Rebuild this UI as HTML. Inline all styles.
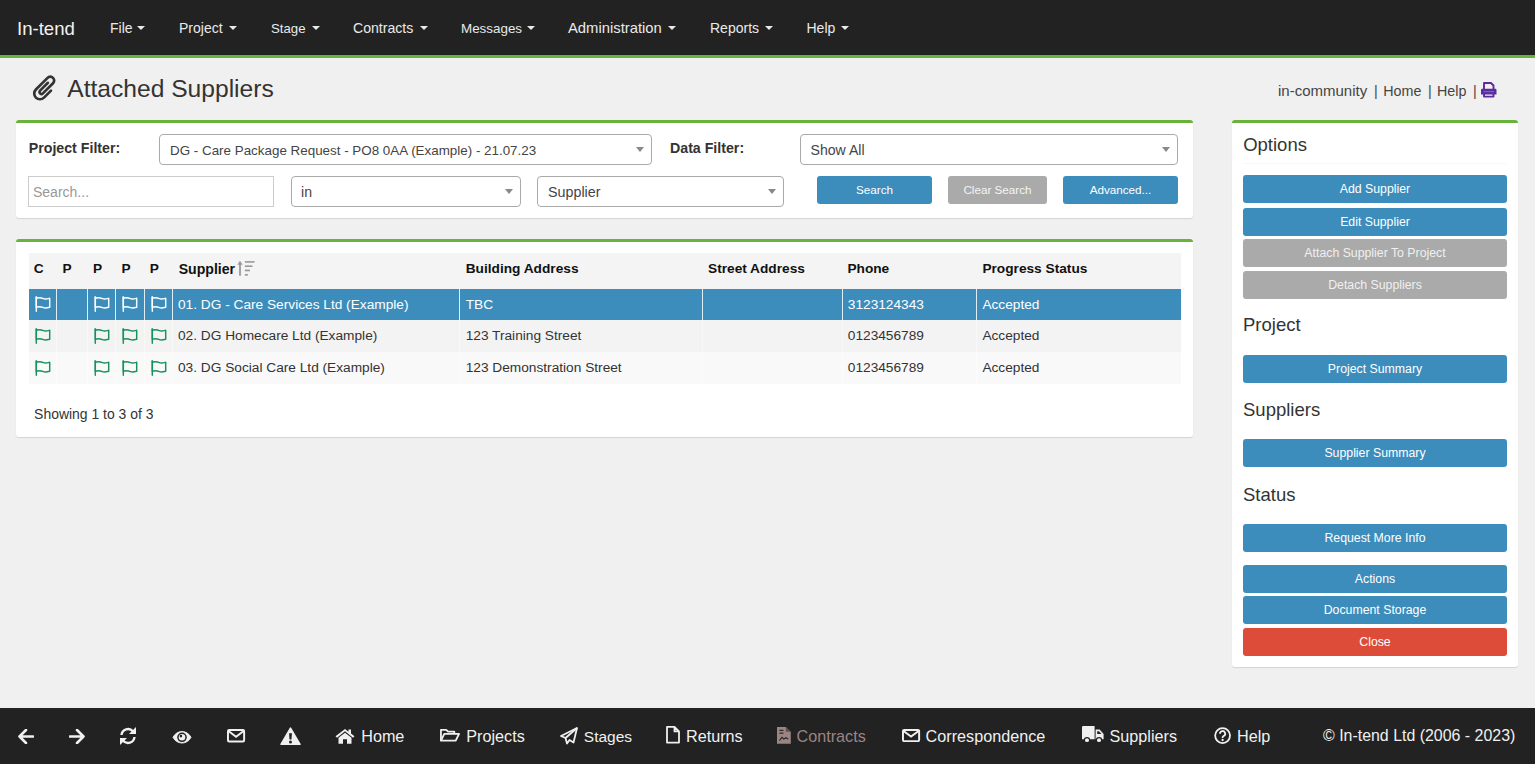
<!DOCTYPE html>
<html><head><meta charset="utf-8"><title>Attached Suppliers</title>
<style>
html,body{margin:0;padding:0;}
body{width:1535px;height:764px;overflow:hidden;position:relative;background:#f0f0f0;font-family:"Liberation Sans", sans-serif;}
.t{position:absolute;white-space:nowrap;}
.r{position:absolute;}
</style></head><body>
<div class="r" style="left:0px;top:0px;width:1535px;height:55px;background:#222;"></div>
<div class="r" style="left:0px;top:55px;width:1535px;height:3px;background:#69b33d;"></div>
<div class="t" style="left:17.00px;top:19.86px;font-size:18.6px;line-height:18.6px;font-weight:normal;color:#f2f2f2;">In-tend</div>
<div class="t" style="left:110.00px;top:21.25px;font-size:14.0px;line-height:14.0px;font-weight:normal;color:#eaeaea;">File</div>
<div class="t" style="left:179.00px;top:21.25px;font-size:14.0px;line-height:14.0px;font-weight:normal;color:#eaeaea;">Project</div>
<div class="t" style="left:271.00px;top:21.93px;font-size:13.2px;line-height:13.2px;font-weight:normal;color:#eaeaea;">Stage</div>
<div class="t" style="left:353.00px;top:21.16px;font-size:14.1px;line-height:14.1px;font-weight:normal;color:#eaeaea;">Contracts</div>
<div class="t" style="left:461.00px;top:21.76px;font-size:13.4px;line-height:13.4px;font-weight:normal;color:#eaeaea;">Messages</div>
<div class="t" style="left:568.00px;top:20.57px;font-size:14.8px;line-height:14.8px;font-weight:normal;color:#eaeaea;">Administration</div>
<div class="t" style="left:710.00px;top:21.25px;font-size:14.0px;line-height:14.0px;font-weight:normal;color:#eaeaea;">Reports</div>
<div class="t" style="left:806.50px;top:21.25px;font-size:14.0px;line-height:14.0px;font-weight:normal;color:#eaeaea;">Help</div>
<svg class="r" style="left:137.4px;top:26.4px;" width="8" height="4" viewBox="0 0 8 4" preserveAspectRatio="none"><path d="M0 0H8L4 4Z" fill="#eaeaea"/></svg>
<svg class="r" style="left:228.8px;top:26.4px;" width="8" height="4" viewBox="0 0 8 4" preserveAspectRatio="none"><path d="M0 0H8L4 4Z" fill="#eaeaea"/></svg>
<svg class="r" style="left:311.6px;top:26.4px;" width="8" height="4" viewBox="0 0 8 4" preserveAspectRatio="none"><path d="M0 0H8L4 4Z" fill="#eaeaea"/></svg>
<svg class="r" style="left:419.6px;top:26.4px;" width="8" height="4" viewBox="0 0 8 4" preserveAspectRatio="none"><path d="M0 0H8L4 4Z" fill="#eaeaea"/></svg>
<svg class="r" style="left:526.6px;top:26.4px;" width="8" height="4" viewBox="0 0 8 4" preserveAspectRatio="none"><path d="M0 0H8L4 4Z" fill="#eaeaea"/></svg>
<svg class="r" style="left:668px;top:26.4px;" width="8" height="4" viewBox="0 0 8 4" preserveAspectRatio="none"><path d="M0 0H8L4 4Z" fill="#eaeaea"/></svg>
<svg class="r" style="left:765px;top:26.4px;" width="8" height="4" viewBox="0 0 8 4" preserveAspectRatio="none"><path d="M0 0H8L4 4Z" fill="#eaeaea"/></svg>
<svg class="r" style="left:840.8px;top:26.4px;" width="8" height="4" viewBox="0 0 8 4" preserveAspectRatio="none"><path d="M0 0H8L4 4Z" fill="#eaeaea"/></svg>
<svg class="r" style="left:29.5px;top:73px;" width="30" height="30" viewBox="0 0 30 30" preserveAspectRatio="none"><g transform="translate(15 15.5) rotate(45) scale(1.1)" fill="none" stroke="#333" stroke-width="2.45" stroke-linecap="round"><path d="M5.2 -2.5 V6.5 A5.2 5.2 0 0 1 -5.2 6.5 V-8.5 A3.5 3.5 0 0 1 1.8 -8.5 V4.5 A1.8 1.8 0 0 1 -1.8 4.5 V-5.5"/></g></svg>
<div class="t" style="left:67.30px;top:77.48px;font-size:24.6px;line-height:24.6px;font-weight:normal;color:#333;">Attached Suppliers</div>
<div class="t" style="left:1278.00px;top:83.00px;font-size:15.0px;line-height:15.0px;font-weight:normal;color:#444;">in-community</div>
<div class="t" style="left:1374.00px;top:83.60px;font-size:14.3px;line-height:14.3px;font-weight:normal;color:#444;">|</div>
<div class="t" style="left:1383.30px;top:83.60px;font-size:14.3px;line-height:14.3px;font-weight:normal;color:#444;">Home</div>
<div class="t" style="left:1428.00px;top:83.60px;font-size:14.3px;line-height:14.3px;font-weight:normal;color:#444;">|</div>
<div class="t" style="left:1437.00px;top:83.60px;font-size:14.3px;line-height:14.3px;font-weight:normal;color:#444;">Help</div>
<div class="t" style="left:1473.00px;top:83.60px;font-size:14.3px;line-height:14.3px;font-weight:normal;color:#444;">|</div>
<svg class="r" style="left:1481px;top:82.3px;" width="16" height="16" viewBox="0 0 16 16" preserveAspectRatio="none"><g fill="none" stroke="#5b2a9e" stroke-width="1.9" stroke-linejoin="round"><path d="M3 7.5V1H10L12.5 3.5V7.5"/><path d="M3 11.5V14.6H12.5V11.5"/></g><path d="M1.2 6.8H14.3A1.2 1.2 0 0 1 15.5 8V12.5H0V8A1.2 1.2 0 0 1 1.2 6.8Z" fill="#5b2a9e"/><rect x="2.5" y="9.2" width="10.5" height="0.9" fill="#8a6bc0"/></svg>
<div class="r" style="left:16px;top:120px;width:1177px;height:98px;background:#fff;border-top:3px solid #69b33d;border-radius:3px;box-shadow:0 1px 1px rgba(0,0,0,0.12);box-sizing:border-box;"></div>
<div class="t" style="left:28.75px;top:140.98px;font-size:14.2px;line-height:14.2px;font-weight:bold;color:#333;">Project Filter:</div>
<div class="t" style="left:670.00px;top:140.98px;font-size:14.2px;line-height:14.2px;font-weight:bold;color:#333;">Data Filter:</div>
<div class="r" style="left:159px;top:134px;width:493px;height:31px;background:#fff;border:1px solid #aaa;border-radius:4px;box-sizing:border-box;"></div>
<div class="t" style="left:170.00px;top:143.66px;font-size:13.4px;line-height:13.4px;font-weight:normal;color:#444;">DG - Care Package Request - PO8 0AA (Example) - 21.07.23</div>
<svg class="r" style="left:636px;top:147px;" width="8" height="5" viewBox="0 0 8 5" preserveAspectRatio="none"><path d="M0 0H8L4 5Z" fill="#888"/></svg>
<div class="r" style="left:800px;top:134px;width:378px;height:31px;background:#fff;border:1px solid #aaa;border-radius:4px;box-sizing:border-box;"></div>
<div class="t" style="left:810.50px;top:143.06px;font-size:14.1px;line-height:14.1px;font-weight:normal;color:#444;">Show All</div>
<svg class="r" style="left:1162px;top:147px;" width="8" height="5" viewBox="0 0 8 5" preserveAspectRatio="none"><path d="M0 0H8L4 5Z" fill="#888"/></svg>
<div class="r" style="left:28px;top:176px;width:246px;height:31px;background:#fff;border:1px solid #ccc;box-sizing:border-box;"></div>
<div class="t" style="left:33.00px;top:184.95px;font-size:14.0px;line-height:14.0px;font-weight:normal;color:#999;">Search...</div>
<div class="r" style="left:291px;top:176px;width:230px;height:31px;background:#fff;border:1px solid #aaa;border-radius:4px;box-sizing:border-box;"></div>
<div class="t" style="left:301.00px;top:185.06px;font-size:14.1px;line-height:14.1px;font-weight:normal;color:#444;">in</div>
<svg class="r" style="left:505px;top:189px;" width="8" height="5" viewBox="0 0 8 5" preserveAspectRatio="none"><path d="M0 0H8L4 5Z" fill="#888"/></svg>
<div class="r" style="left:537px;top:176px;width:247px;height:31px;background:#fff;border:1px solid #aaa;border-radius:4px;box-sizing:border-box;"></div>
<div class="t" style="left:548.00px;top:184.90px;font-size:14.3px;line-height:14.3px;font-weight:normal;color:#444;">Supplier</div>
<svg class="r" style="left:768px;top:189px;" width="8" height="5" viewBox="0 0 8 5" preserveAspectRatio="none"><path d="M0 0H8L4 5Z" fill="#888"/></svg>
<div class="r" style="left:817px;top:176px;width:115px;height:28px;background:#3c8dbc;border-radius:3px;"></div>
<div class="t" style="left:574.50px;width:600px;text-align:center;top:184.40px;font-size:11.7px;line-height:11.7px;font-weight:normal;color:#fff;">Search</div>
<div class="r" style="left:948px;top:176px;width:99px;height:28px;background:#aaaaaa;border-radius:3px;"></div>
<div class="t" style="left:697.50px;width:600px;text-align:center;top:184.40px;font-size:11.7px;line-height:11.7px;font-weight:normal;color:#f4f4f4;">Clear Search</div>
<div class="r" style="left:1063px;top:176px;width:115px;height:28px;background:#3c8dbc;border-radius:3px;"></div>
<div class="t" style="left:820.50px;width:600px;text-align:center;top:184.40px;font-size:11.7px;line-height:11.7px;font-weight:normal;color:#fff;">Advanced...</div>
<div class="r" style="left:16px;top:239px;width:1177px;height:198px;background:#fff;border-top:3px solid #69b33d;border-radius:3px;box-shadow:0 1px 1px rgba(0,0,0,0.12);box-sizing:border-box;"></div>
<div class="r" style="left:29px;top:253px;width:1152px;height:36px;background:#f4f4f4;"></div>
<div class="r" style="left:29px;top:289px;width:1152px;height:31px;background:#3c8dbc;"></div>
<div class="r" style="left:29px;top:320px;width:1152px;height:32px;background:#f3f3f3;"></div>
<div class="r" style="left:29px;top:352px;width:1152px;height:32px;background:#f9f9f9;"></div>
<div class="r" style="left:56px;top:289px;width:1px;height:31px;background:#fff;opacity:0.85;"></div>
<div class="r" style="left:56px;top:320px;width:1px;height:64px;background:#fff;opacity:0.45;"></div>
<div class="r" style="left:87px;top:289px;width:1px;height:31px;background:#fff;opacity:0.85;"></div>
<div class="r" style="left:87px;top:320px;width:1px;height:64px;background:#fff;opacity:0.45;"></div>
<div class="r" style="left:115px;top:289px;width:1px;height:31px;background:#fff;opacity:0.85;"></div>
<div class="r" style="left:115px;top:320px;width:1px;height:64px;background:#fff;opacity:0.45;"></div>
<div class="r" style="left:144px;top:289px;width:1px;height:31px;background:#fff;opacity:0.85;"></div>
<div class="r" style="left:144px;top:320px;width:1px;height:64px;background:#fff;opacity:0.45;"></div>
<div class="r" style="left:172px;top:289px;width:1px;height:31px;background:#fff;opacity:0.85;"></div>
<div class="r" style="left:172px;top:320px;width:1px;height:64px;background:#fff;opacity:0.45;"></div>
<div class="r" style="left:459px;top:289px;width:1px;height:31px;background:#fff;opacity:0.85;"></div>
<div class="r" style="left:459px;top:320px;width:1px;height:64px;background:#fff;opacity:0.45;"></div>
<div class="r" style="left:702px;top:289px;width:1px;height:31px;background:#fff;opacity:0.85;"></div>
<div class="r" style="left:702px;top:320px;width:1px;height:64px;background:#fff;opacity:0.45;"></div>
<div class="r" style="left:842px;top:289px;width:1px;height:31px;background:#fff;opacity:0.85;"></div>
<div class="r" style="left:842px;top:320px;width:1px;height:64px;background:#fff;opacity:0.45;"></div>
<div class="r" style="left:976px;top:289px;width:1px;height:31px;background:#fff;opacity:0.85;"></div>
<div class="r" style="left:976px;top:320px;width:1px;height:64px;background:#fff;opacity:0.45;"></div>
<div class="t" style="left:33.75px;top:262.20px;font-size:13.7px;line-height:13.7px;font-weight:bold;color:#111;">C</div>
<div class="t" style="left:62.50px;top:262.20px;font-size:13.7px;line-height:13.7px;font-weight:bold;color:#111;">P</div>
<div class="t" style="left:93.00px;top:262.20px;font-size:13.7px;line-height:13.7px;font-weight:bold;color:#111;">P</div>
<div class="t" style="left:121.60px;top:262.20px;font-size:13.7px;line-height:13.7px;font-weight:bold;color:#111;">P</div>
<div class="t" style="left:149.70px;top:262.20px;font-size:13.7px;line-height:13.7px;font-weight:bold;color:#111;">P</div>
<div class="t" style="left:178.70px;top:261.86px;font-size:14.1px;line-height:14.1px;font-weight:bold;color:#111;">Supplier</div>
<svg class="r" style="left:237px;top:260px;" width="18" height="17" viewBox="0 0 18 17" preserveAspectRatio="none"><g fill="#999"><path d="M0.3 4.8L3 0.8L5.7 4.8Z"/><rect x="2.1" y="3" width="1.8" height="12.7"/><rect x="7.9" y="1.1" width="9.7" height="1.6"/><rect x="7.9" y="5.4" width="7.6" height="1.6"/><rect x="7.9" y="9.6" width="5.1" height="1.7"/><rect x="7.9" y="14" width="2.9" height="1.7"/></g></svg>
<div class="t" style="left:465.70px;top:262.20px;font-size:13.7px;line-height:13.7px;font-weight:bold;color:#111;">Building Address</div>
<div class="t" style="left:708.00px;top:262.20px;font-size:13.7px;line-height:13.7px;font-weight:bold;color:#111;">Street Address</div>
<div class="t" style="left:847.40px;top:262.20px;font-size:13.7px;line-height:13.7px;font-weight:bold;color:#111;">Phone</div>
<div class="t" style="left:982.40px;top:262.20px;font-size:13.7px;line-height:13.7px;font-weight:bold;color:#111;">Progress Status</div>
<svg class="r" style="left:35px;top:295.9px;" width="16" height="17" viewBox="0 0 16 17" preserveAspectRatio="none"><g fill="none" stroke="#fff" stroke-width="1.45" stroke-linejoin="round" stroke-linecap="round"><path d="M1.3 1.1V15.3"/><path d="M1.3 2.3C4 1.4 6.5 1.9 8.5 2.7C10.5 3.5 12.5 2.9 14.7 2.3V11.2C12.5 11.8 10.5 12.4 8.5 11.6C6.5 10.8 4 10.3 1.3 11.2Z"/></g><circle cx="1.3" cy="1.3" r="1" fill="#fff"/></svg>
<svg class="r" style="left:93.5px;top:295.9px;" width="16" height="17" viewBox="0 0 16 17" preserveAspectRatio="none"><g fill="none" stroke="#fff" stroke-width="1.45" stroke-linejoin="round" stroke-linecap="round"><path d="M1.3 1.1V15.3"/><path d="M1.3 2.3C4 1.4 6.5 1.9 8.5 2.7C10.5 3.5 12.5 2.9 14.7 2.3V11.2C12.5 11.8 10.5 12.4 8.5 11.6C6.5 10.8 4 10.3 1.3 11.2Z"/></g><circle cx="1.3" cy="1.3" r="1" fill="#fff"/></svg>
<svg class="r" style="left:121.8px;top:295.9px;" width="16" height="17" viewBox="0 0 16 17" preserveAspectRatio="none"><g fill="none" stroke="#fff" stroke-width="1.45" stroke-linejoin="round" stroke-linecap="round"><path d="M1.3 1.1V15.3"/><path d="M1.3 2.3C4 1.4 6.5 1.9 8.5 2.7C10.5 3.5 12.5 2.9 14.7 2.3V11.2C12.5 11.8 10.5 12.4 8.5 11.6C6.5 10.8 4 10.3 1.3 11.2Z"/></g><circle cx="1.3" cy="1.3" r="1" fill="#fff"/></svg>
<svg class="r" style="left:150.5px;top:295.9px;" width="16" height="17" viewBox="0 0 16 17" preserveAspectRatio="none"><g fill="none" stroke="#fff" stroke-width="1.45" stroke-linejoin="round" stroke-linecap="round"><path d="M1.3 1.1V15.3"/><path d="M1.3 2.3C4 1.4 6.5 1.9 8.5 2.7C10.5 3.5 12.5 2.9 14.7 2.3V11.2C12.5 11.8 10.5 12.4 8.5 11.6C6.5 10.8 4 10.3 1.3 11.2Z"/></g><circle cx="1.3" cy="1.3" r="1" fill="#fff"/></svg>
<div class="t" style="left:178.00px;top:297.60px;font-size:13.7px;line-height:13.7px;font-weight:normal;color:#fff;">01. DG - Care Services Ltd (Example)</div>
<div class="t" style="left:465.70px;top:297.60px;font-size:13.7px;line-height:13.7px;font-weight:normal;color:#fff;">TBC</div>
<div class="t" style="left:847.80px;top:297.60px;font-size:13.7px;line-height:13.7px;font-weight:normal;color:#fff;">3123124343</div>
<div class="t" style="left:982.40px;top:297.60px;font-size:13.7px;line-height:13.7px;font-weight:normal;color:#fff;">Accepted</div>
<svg class="r" style="left:35px;top:327.7px;" width="16" height="17" viewBox="0 0 16 17" preserveAspectRatio="none"><g fill="none" stroke="#16925a" stroke-width="1.45" stroke-linejoin="round" stroke-linecap="round"><path d="M1.3 1.1V15.3"/><path d="M1.3 2.3C4 1.4 6.5 1.9 8.5 2.7C10.5 3.5 12.5 2.9 14.7 2.3V11.2C12.5 11.8 10.5 12.4 8.5 11.6C6.5 10.8 4 10.3 1.3 11.2Z"/></g><circle cx="1.3" cy="1.3" r="1" fill="#16925a"/></svg>
<svg class="r" style="left:93.5px;top:327.7px;" width="16" height="17" viewBox="0 0 16 17" preserveAspectRatio="none"><g fill="none" stroke="#16925a" stroke-width="1.45" stroke-linejoin="round" stroke-linecap="round"><path d="M1.3 1.1V15.3"/><path d="M1.3 2.3C4 1.4 6.5 1.9 8.5 2.7C10.5 3.5 12.5 2.9 14.7 2.3V11.2C12.5 11.8 10.5 12.4 8.5 11.6C6.5 10.8 4 10.3 1.3 11.2Z"/></g><circle cx="1.3" cy="1.3" r="1" fill="#16925a"/></svg>
<svg class="r" style="left:121.8px;top:327.7px;" width="16" height="17" viewBox="0 0 16 17" preserveAspectRatio="none"><g fill="none" stroke="#16925a" stroke-width="1.45" stroke-linejoin="round" stroke-linecap="round"><path d="M1.3 1.1V15.3"/><path d="M1.3 2.3C4 1.4 6.5 1.9 8.5 2.7C10.5 3.5 12.5 2.9 14.7 2.3V11.2C12.5 11.8 10.5 12.4 8.5 11.6C6.5 10.8 4 10.3 1.3 11.2Z"/></g><circle cx="1.3" cy="1.3" r="1" fill="#16925a"/></svg>
<svg class="r" style="left:150.5px;top:327.7px;" width="16" height="17" viewBox="0 0 16 17" preserveAspectRatio="none"><g fill="none" stroke="#16925a" stroke-width="1.45" stroke-linejoin="round" stroke-linecap="round"><path d="M1.3 1.1V15.3"/><path d="M1.3 2.3C4 1.4 6.5 1.9 8.5 2.7C10.5 3.5 12.5 2.9 14.7 2.3V11.2C12.5 11.8 10.5 12.4 8.5 11.6C6.5 10.8 4 10.3 1.3 11.2Z"/></g><circle cx="1.3" cy="1.3" r="1" fill="#16925a"/></svg>
<div class="t" style="left:178.00px;top:329.40px;font-size:13.7px;line-height:13.7px;font-weight:normal;color:#333;">02. DG Homecare Ltd (Example)</div>
<div class="t" style="left:465.70px;top:329.40px;font-size:13.7px;line-height:13.7px;font-weight:normal;color:#333;">123 Training Street</div>
<div class="t" style="left:847.80px;top:329.40px;font-size:13.7px;line-height:13.7px;font-weight:normal;color:#333;">0123456789</div>
<div class="t" style="left:982.40px;top:329.40px;font-size:13.7px;line-height:13.7px;font-weight:normal;color:#333;">Accepted</div>
<svg class="r" style="left:35px;top:359.7px;" width="16" height="17" viewBox="0 0 16 17" preserveAspectRatio="none"><g fill="none" stroke="#16925a" stroke-width="1.45" stroke-linejoin="round" stroke-linecap="round"><path d="M1.3 1.1V15.3"/><path d="M1.3 2.3C4 1.4 6.5 1.9 8.5 2.7C10.5 3.5 12.5 2.9 14.7 2.3V11.2C12.5 11.8 10.5 12.4 8.5 11.6C6.5 10.8 4 10.3 1.3 11.2Z"/></g><circle cx="1.3" cy="1.3" r="1" fill="#16925a"/></svg>
<svg class="r" style="left:93.5px;top:359.7px;" width="16" height="17" viewBox="0 0 16 17" preserveAspectRatio="none"><g fill="none" stroke="#16925a" stroke-width="1.45" stroke-linejoin="round" stroke-linecap="round"><path d="M1.3 1.1V15.3"/><path d="M1.3 2.3C4 1.4 6.5 1.9 8.5 2.7C10.5 3.5 12.5 2.9 14.7 2.3V11.2C12.5 11.8 10.5 12.4 8.5 11.6C6.5 10.8 4 10.3 1.3 11.2Z"/></g><circle cx="1.3" cy="1.3" r="1" fill="#16925a"/></svg>
<svg class="r" style="left:121.8px;top:359.7px;" width="16" height="17" viewBox="0 0 16 17" preserveAspectRatio="none"><g fill="none" stroke="#16925a" stroke-width="1.45" stroke-linejoin="round" stroke-linecap="round"><path d="M1.3 1.1V15.3"/><path d="M1.3 2.3C4 1.4 6.5 1.9 8.5 2.7C10.5 3.5 12.5 2.9 14.7 2.3V11.2C12.5 11.8 10.5 12.4 8.5 11.6C6.5 10.8 4 10.3 1.3 11.2Z"/></g><circle cx="1.3" cy="1.3" r="1" fill="#16925a"/></svg>
<svg class="r" style="left:150.5px;top:359.7px;" width="16" height="17" viewBox="0 0 16 17" preserveAspectRatio="none"><g fill="none" stroke="#16925a" stroke-width="1.45" stroke-linejoin="round" stroke-linecap="round"><path d="M1.3 1.1V15.3"/><path d="M1.3 2.3C4 1.4 6.5 1.9 8.5 2.7C10.5 3.5 12.5 2.9 14.7 2.3V11.2C12.5 11.8 10.5 12.4 8.5 11.6C6.5 10.8 4 10.3 1.3 11.2Z"/></g><circle cx="1.3" cy="1.3" r="1" fill="#16925a"/></svg>
<div class="t" style="left:178.00px;top:361.40px;font-size:13.7px;line-height:13.7px;font-weight:normal;color:#333;">03. DG Social Care Ltd (Example)</div>
<div class="t" style="left:465.70px;top:361.40px;font-size:13.7px;line-height:13.7px;font-weight:normal;color:#333;">123 Demonstration Street</div>
<div class="t" style="left:847.80px;top:361.40px;font-size:13.7px;line-height:13.7px;font-weight:normal;color:#333;">0123456789</div>
<div class="t" style="left:982.40px;top:361.40px;font-size:13.7px;line-height:13.7px;font-weight:normal;color:#333;">Accepted</div>
<div class="t" style="left:34.10px;top:408.39px;font-size:13.95px;line-height:13.95px;font-weight:normal;color:#333;">Showing 1 to 3 of 3</div>
<div class="r" style="left:1232px;top:120px;width:286px;height:547px;background:#fff;border-top:3px solid #69b33d;border-radius:3px;box-shadow:0 1px 1px rgba(0,0,0,0.12);box-sizing:border-box;"></div>
<div class="t" style="left:1243.20px;top:135.94px;font-size:18.5px;line-height:18.5px;font-weight:normal;color:#333;">Options</div>
<div class="r" style="left:1243px;top:163px;width:264px;height:1px;background:#f7f7f7;"></div>
<div class="t" style="left:1243.00px;top:316.14px;font-size:18.5px;line-height:18.5px;font-weight:normal;color:#333;">Project</div>
<div class="t" style="left:1243.00px;top:400.84px;font-size:18.5px;line-height:18.5px;font-weight:normal;color:#333;">Suppliers</div>
<div class="t" style="left:1243.00px;top:485.64px;font-size:18.5px;line-height:18.5px;font-weight:normal;color:#333;">Status</div>
<div class="r" style="left:1243px;top:175px;width:264px;height:28px;background:#3c8dbc;border-radius:3px;"></div>
<div class="t" style="left:1075.00px;width:600px;text-align:center;top:182.89px;font-size:12.3px;line-height:12.3px;font-weight:normal;color:#fff;">Add Supplier</div>
<div class="r" style="left:1243px;top:208px;width:264px;height:28px;background:#3c8dbc;border-radius:3px;"></div>
<div class="t" style="left:1075.00px;width:600px;text-align:center;top:215.89px;font-size:12.3px;line-height:12.3px;font-weight:normal;color:#fff;">Edit Supplier</div>
<div class="r" style="left:1243px;top:239px;width:264px;height:28px;background:#aaaaaa;border-radius:3px;"></div>
<div class="t" style="left:1075.00px;width:600px;text-align:center;top:246.89px;font-size:12.3px;line-height:12.3px;font-weight:normal;color:#f0f0f0;">Attach Supplier To Project</div>
<div class="r" style="left:1243px;top:271px;width:264px;height:28px;background:#aaaaaa;border-radius:3px;"></div>
<div class="t" style="left:1075.00px;width:600px;text-align:center;top:278.89px;font-size:12.3px;line-height:12.3px;font-weight:normal;color:#f0f0f0;">Detach Suppliers</div>
<div class="r" style="left:1243px;top:355px;width:264px;height:28px;background:#3c8dbc;border-radius:3px;"></div>
<div class="t" style="left:1075.00px;width:600px;text-align:center;top:362.89px;font-size:12.3px;line-height:12.3px;font-weight:normal;color:#fff;">Project Summary</div>
<div class="r" style="left:1243px;top:439px;width:264px;height:28px;background:#3c8dbc;border-radius:3px;"></div>
<div class="t" style="left:1075.00px;width:600px;text-align:center;top:446.89px;font-size:12.3px;line-height:12.3px;font-weight:normal;color:#fff;">Supplier Summary</div>
<div class="r" style="left:1243px;top:524px;width:264px;height:28px;background:#3c8dbc;border-radius:3px;"></div>
<div class="t" style="left:1075.00px;width:600px;text-align:center;top:531.89px;font-size:12.3px;line-height:12.3px;font-weight:normal;color:#fff;">Request More Info</div>
<div class="r" style="left:1243px;top:565px;width:264px;height:28px;background:#3c8dbc;border-radius:3px;"></div>
<div class="t" style="left:1075.00px;width:600px;text-align:center;top:572.89px;font-size:12.3px;line-height:12.3px;font-weight:normal;color:#fff;">Actions</div>
<div class="r" style="left:1243px;top:596px;width:264px;height:28px;background:#3c8dbc;border-radius:3px;"></div>
<div class="t" style="left:1075.00px;width:600px;text-align:center;top:603.89px;font-size:12.3px;line-height:12.3px;font-weight:normal;color:#fff;">Document Storage</div>
<div class="r" style="left:1243px;top:628px;width:264px;height:28px;background:#dd4b39;border-radius:3px;"></div>
<div class="t" style="left:1075.00px;width:600px;text-align:center;top:635.89px;font-size:12.3px;line-height:12.3px;font-weight:normal;color:#fff;">Close</div>
<div class="r" style="left:0px;top:708px;width:1535px;height:56px;background:#222;"></div>
<svg class="r" style="left:18px;top:729px;" width="16" height="15" viewBox="0 0 16 15" preserveAspectRatio="none"><path d="M8 1L1.5 7.5L8 14M1.5 7.5H15" fill="none" stroke="#f0f0f0" stroke-width="2.6" stroke-linecap="round" stroke-linejoin="round"/></svg>
<svg class="r" style="left:68.6px;top:729px;" width="16" height="15" viewBox="0 0 16 15" preserveAspectRatio="none"><path d="M8 1L14.5 7.5L8 14M14.5 7.5H1" fill="none" stroke="#f0f0f0" stroke-width="2.6" stroke-linecap="round" stroke-linejoin="round"/></svg>
<svg class="r" style="left:119.4px;top:727.4px;" width="18" height="18" viewBox="0 0 18 18" preserveAspectRatio="none"><g fill="none" stroke="#f0f0f0" stroke-width="2.4"><path d="M2.5 8A6.5 6.5 0 0 1 14 4.5"/><path d="M15.5 10A6.5 6.5 0 0 1 4 13.5"/></g><path d="M17 0V7H10Z" fill="#f0f0f0"/><path d="M1 18V11H8Z" fill="#f0f0f0"/></svg>
<svg class="r" style="left:172px;top:730.7px;" width="20" height="13" viewBox="0 0 20 13" preserveAspectRatio="none"><path d="M1 6.3C3 2.6 6.3 0.6 10 0.6S17 2.6 19 6.3C17 10 13.7 12 10 12S3 10 1 6.3Z" fill="#f0f0f0" stroke="#f0f0f0" stroke-width="1" stroke-linejoin="round"/><circle cx="10" cy="6.3" r="4.8" fill="#222"/><circle cx="10" cy="6.3" r="3.3" fill="#f0f0f0"/><circle cx="8.9" cy="5.1" r="1.3" fill="#222"/></svg>
<svg class="r" style="left:227px;top:729.4px;" width="18.6" height="13.8" viewBox="0 0 19 14" preserveAspectRatio="none"><g fill="none" stroke="#f0f0f0" stroke-width="2"><rect x="1" y="1" width="16.5" height="11.7" rx="1.2"/><path d="M1.5 2L9.25 7.8L17 2"/></g></svg>
<svg class="r" style="left:279.7px;top:727.4px;" width="21" height="19" viewBox="0 0 21 19" preserveAspectRatio="none"><path d="M10.5 1.2L20 17.3H1Z" fill="#f0f0f0" stroke="#f0f0f0" stroke-width="1.6" stroke-linejoin="round"/><path d="M9.1 6.2H11.9L11.5 12.6H9.5Z" fill="#222"/><circle cx="10.5" cy="15" r="1.5" fill="#222"/></svg>
<svg class="r" style="left:335.3px;top:727.6px;overflow:visible" width="20" height="15.8" viewBox="0 0 20 17" preserveAspectRatio="none"><path d="M10 1L0.5 9L2 10.5L10 3.5L18 10.5L19.5 9L16 6V1.5H13.5V4Z" fill="#f0f0f0"/><path d="M3.5 10.5L10 5L16.5 10.5V17H12V12H8V17H3.5Z" fill="#f0f0f0"/></svg>
<div class="t" style="left:361.20px;top:728.09px;font-size:16.2px;line-height:16.2px;font-weight:normal;color:#f0f0f0;">Home</div>
<svg class="r" style="left:440px;top:728.4px;" width="20" height="13.6" viewBox="0 0 21 15" preserveAspectRatio="none"><g fill="none" stroke="#f0f0f0" stroke-width="1.9" stroke-linejoin="round"><path d="M1 14V2H6.5L8.5 4H15V6.5"/><path d="M1 14L4.5 6.5H20L16.5 14Z"/></g></svg>
<div class="t" style="left:466.30px;top:728.09px;font-size:16.2px;line-height:16.2px;font-weight:normal;color:#f0f0f0;">Projects</div>
<svg class="r" style="left:560px;top:726.7px;" width="18" height="18" viewBox="0 0 18 18" preserveAspectRatio="none"><g fill="none" stroke="#f0f0f0" stroke-width="1.8" stroke-linejoin="round"><path d="M17 1L1 9L5.5 11L7 16.5L9.5 13L13.5 15.5Z"/><path d="M17 1L5.5 11"/></g></svg>
<div class="t" style="left:583.80px;top:728.68px;font-size:15.5px;line-height:15.5px;font-weight:normal;color:#f0f0f0;">Stages</div>
<svg class="r" style="left:666.3px;top:726.3px;" width="14" height="17.6" viewBox="0 0 14 18" preserveAspectRatio="none"><path d="M1 1H8.5L13 5.5V17H1Z M8.5 1V5.5H13" fill="none" stroke="#f0f0f0" stroke-width="1.8" stroke-linejoin="round"/></svg>
<div class="t" style="left:686.00px;top:728.09px;font-size:16.2px;line-height:16.2px;font-weight:normal;color:#f0f0f0;">Returns</div>
<svg class="r" style="left:777.3px;top:727.2px;" width="13.8" height="16.8" viewBox="0 0 14 18" preserveAspectRatio="none"><path d="M0 0H9L14 5V18H0Z" fill="#9b8484"/><path d="M9 0V5H14" fill="#222" opacity="0.5"/><path d="M2.5 14.5L5 11L7 13L9 11.5L11.5 13" fill="none" stroke="#222" stroke-width="1.2"/><rect x="2.5" y="3" width="4" height="1.2" fill="#222"/><rect x="2.5" y="6" width="4" height="1.2" fill="#222"/></svg>
<div class="t" style="left:796.50px;top:728.09px;font-size:16.2px;line-height:16.2px;font-weight:normal;color:#9b8484;">Contracts</div>
<svg class="r" style="left:902px;top:728.6px;" width="18.6" height="13.4" viewBox="0 0 19 14" preserveAspectRatio="none"><g fill="none" stroke="#f0f0f0" stroke-width="2"><rect x="1" y="1" width="16.5" height="11.7" rx="1.2"/><path d="M1.5 2L9.25 7.8L17 2"/></g></svg>
<div class="t" style="left:925.60px;top:728.09px;font-size:16.2px;line-height:16.2px;font-weight:normal;color:#f0f0f0;">Correspondence</div>
<svg class="r" style="left:1081.5px;top:726.4px;" width="22" height="17.3" viewBox="0 0 22 17.5" preserveAspectRatio="none"><path d="M0 1.2A1.2 1.2 0 0 1 1.2 0H12.6V13.5H0Z" fill="#f0f0f0"/><path d="M13.6 3.6H17.6L21.6 8.2V13.5H13.6Z" fill="#f0f0f0"/><path d="M15.2 5.2H17L19.5 8.2H15.2Z" fill="#222"/><circle cx="5" cy="14.3" r="3.2" fill="#222"/><circle cx="5" cy="14.3" r="2" fill="#f0f0f0"/><circle cx="17" cy="14.3" r="3.2" fill="#222"/><circle cx="17" cy="14.3" r="2" fill="#f0f0f0"/></svg>
<div class="t" style="left:1109.50px;top:728.09px;font-size:16.2px;line-height:16.2px;font-weight:normal;color:#f0f0f0;">Suppliers</div>
<svg class="r" style="left:1213.5px;top:726.6px;" width="17.2" height="17.2" viewBox="0 0 18 18" preserveAspectRatio="none"><circle cx="9" cy="9" r="7.8" fill="none" stroke="#f0f0f0" stroke-width="1.9"/><path d="M6.3 7A2.7 2.7 0 1 1 10 9.4C9.3 9.8 9 10.2 9 11V11.5" fill="none" stroke="#f0f0f0" stroke-width="1.9"/><circle cx="9" cy="13.6" r="1.2" fill="#f0f0f0"/></svg>
<div class="t" style="left:1237.00px;top:728.09px;font-size:16.2px;line-height:16.2px;font-weight:normal;color:#f0f0f0;">Help</div>
<div class="t" style="left:1323.00px;top:728.32px;font-size:15.93px;line-height:15.93px;font-weight:normal;color:#f0f0f0;">© In-tend Ltd (2006 - 2023)</div>
</body></html>
